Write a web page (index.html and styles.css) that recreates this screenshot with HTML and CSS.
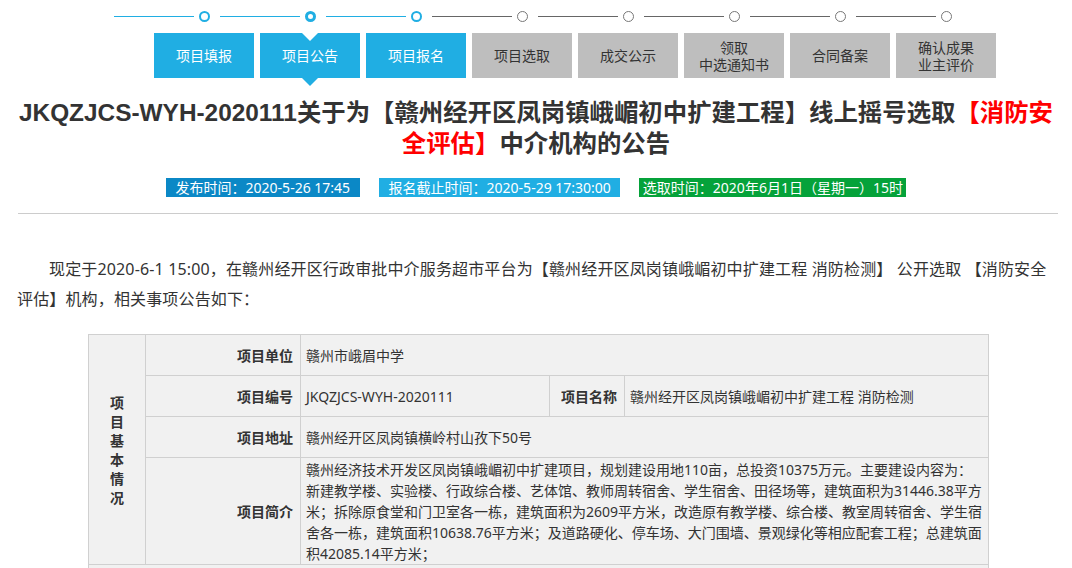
FILE: index.html
```html
<!DOCTYPE html>
<html lang="zh-CN">
<head>
<meta charset="utf-8">
<title>公告</title>
<link rel="stylesheet" href="styles.css">
</head>
<body>
<div class="steps-track">
  <span class="seg on"></span><span class="dot on"></span>
  <span class="seg on"></span><span class="dot cur"></span>
  <span class="seg on"></span><span class="dot on"></span>
  <span class="seg"></span><span class="dot"></span>
  <span class="seg"></span><span class="dot"></span>
  <span class="seg"></span><span class="dot"></span>
  <span class="seg"></span><span class="dot"></span>
  <span class="seg"></span><span class="dot"></span>
</div>
<div class="steps-btns">
  <div class="btn on">项目填报</div>
  <div class="btn on cur">项目公告</div>
  <div class="btn on">项目报名</div>
  <div class="btn">项目选取</div>
  <div class="btn">成交公示</div>
  <div class="btn">领取<br>中选通知书</div>
  <div class="btn">合同备案</div>
  <div class="btn">确认成果<br>业主评价</div>
</div>

<h1 class="title">JKQZJCS-WYH-2020111关于为【赣州经开区凤岗镇峨嵋初中扩建工程】线上摇号选取<span class="red">【消防安全评估】</span>中介机构的公告</h1>

<div class="meta">
  <span class="badge b1">发布时间：2020-5-26 17:45</span>
  <span class="badge b2">报名截止时间：2020-5-29 17:30:00</span>
  <span class="badge b3">选取时间：2020年6月1日（星期一）15时</span>
</div>
<div class="rule"></div>

<p class="intro">现定于2020-6-1 15:00，在赣州经开区行政审批中介服务超市平台为【赣州经开区凤岗镇峨嵋初中扩建工程 消防检测】 公开选取 【消防安全评估】机构，相关事项公告如下：</p>

<table class="info">
  <colgroup>
    <col class="c1"><col class="c2"><col class="c3"><col class="c4"><col class="c5">
  </colgroup>
  <tr class="r">
    <th class="group" rowspan="4"><div class="vtext">项目基本情况</div></th>
    <th class="lab">项目单位</th>
    <td class="val" colspan="3">赣州市峨眉中学</td>
  </tr>
  <tr class="r">
    <th class="lab">项目编号</th>
    <td class="val">JKQZJCS-WYH-2020111</td>
    <th class="lab">项目名称</th>
    <td class="val">赣州经开区凤岗镇峨嵋初中扩建工程 消防检测</td>
  </tr>
  <tr class="r">
    <th class="lab">项目地址</th>
    <td class="val" colspan="3">赣州经开区凤岗镇横岭村山孜下50号</td>
  </tr>
  <tr>
    <th class="lab">项目简介</th>
    <td class="val long" colspan="3">赣州经济技术开发区凤岗镇峨嵋初中扩建项目，规划建设用地110亩，总投资10375万元。主要建设内容为：新建教学楼、实验楼、行政综合楼、艺体馆、教师周转宿舍、学生宿舍、田径场等，建筑面积为31446.38平方米；拆除原食堂和门卫室各一栋，建筑面积为2609平方米，改造原有教学楼、综合楼、教室周转宿舍、学生宿舍各一栋，建筑面积10638.76平方米；及道路硬化、停车场、大门围墙、景观绿化等相应配套工程；总建筑面积42085.14平方米；</td>
  </tr>
  <tr class="r">
    <td class="val" colspan="5">&nbsp;</td>
  </tr>
</table>
</body>
</html>
```

FILE: styles.css
```css
body {
  margin: 0;
  background: #fff;
  color: #333;
  font-family: "Noto Sans", "Noto Sans CJK SC", sans-serif;
  text-spacing-trim: space-all;
}

.steps-track {
  display: flex;
  align-items: center;
  height: 32px;
  padding-left: 114px;
}
.seg {
  width: 80px;
  height: 1px;
  background: #666;
  margin-right: 5px;
}
.seg.on { background: #20aee3; }
.dot {
  width: 11px;
  height: 11px;
  box-sizing: border-box;
  border-radius: 50%;
  border: 1px solid #777;
  margin-right: 10px;
  background: #fff;
}
.dot.on { border: 2px solid #20aee3; }
.dot.cur { border: 3px solid #20aee3; }

.steps-btns {
  display: flex;
  gap: 6px;
  padding-left: 154px;
  margin-top: 1px;
}
.btn {
  position: relative;
  width: 100px;
  height: 45px;
  display: flex;
  align-items: center;
  justify-content: center;
  text-align: center;
  font-size: 14px;
  line-height: 17px;
  background: #bebebe;
  color: #333;
}
.btn.on { background: #20aee3; color: #fff; }
.btn.cur::before,
.btn.cur::after {
  content: "";
  position: absolute;
  left: 50%;
  margin-left: -8px;
  border-left: 8px solid transparent;
  border-right: 8px solid transparent;
}
.btn.cur::before {
  top: 0;
  border-top: 8px solid #fff;
}
.btn.cur::after {
  top: 100%;
  border-top: 8px solid #20aee3;
}

.title {
  margin: 19px 14px 0 14px;
  font-family: "Liberation Sans", "Noto Sans CJK SC", sans-serif;
  font-size: 24.4px;
  line-height: 31px;
  font-weight: bold;
  text-align: center;
  color: #333;
}
.red { color: #ff0000; }

.meta {
  display: flex;
  justify-content: center;
  gap: 19px;
  margin-top: 19px;
}
.badge {
  font-size: 14px;
  line-height: 19px;
  color: #fff;
}
.b1 { background: #0b88c6; padding: 0 10px; }
.b2 { background: #20aee3; padding: 0 9.5px; }
.b3 { background: #05a23a; padding: 0 3.5px; }

.rule {
  height: 1px;
  background: #ccc;
  margin: 16px 14px 0 18px;
}

.intro {
  margin: 40px 22px 0 17px;
  font-size: 16px;
  line-height: 30px;
  text-indent: 32px;
  letter-spacing: 0.15px;
  color: #333;
}

.info {
  margin: 20px 0 0 88px;
  width: 900px;
  table-layout: fixed;
  border-collapse: collapse;
  background: #f1f1f1;
  font-size: 14px;
  color: #333;
}
.c1 { width: 57px; }
.c2 { width: 155px; }
.c3 { width: 249px; }
.c4 { width: 75px; }
.c5 { width: 364px; }
.info th,
.info td {
  border: 1px solid #d0d0d0;
  padding: 0;
}
.info tr.r { height: 41px; }
.lab {
  text-align: right;
  font-weight: bold;
  padding-right: 7px !important;
}
.val {
  text-align: left;
  font-weight: normal;
  padding-left: 5px !important;
  padding-right: 5px !important;
}
.long {
  line-height: 21px;
  height: 106px;
}
.group {
  text-align: center;
  font-weight: bold;
}
.vtext {
  width: 14px;
  margin: 0 auto;
  line-height: 19px;
}
```
